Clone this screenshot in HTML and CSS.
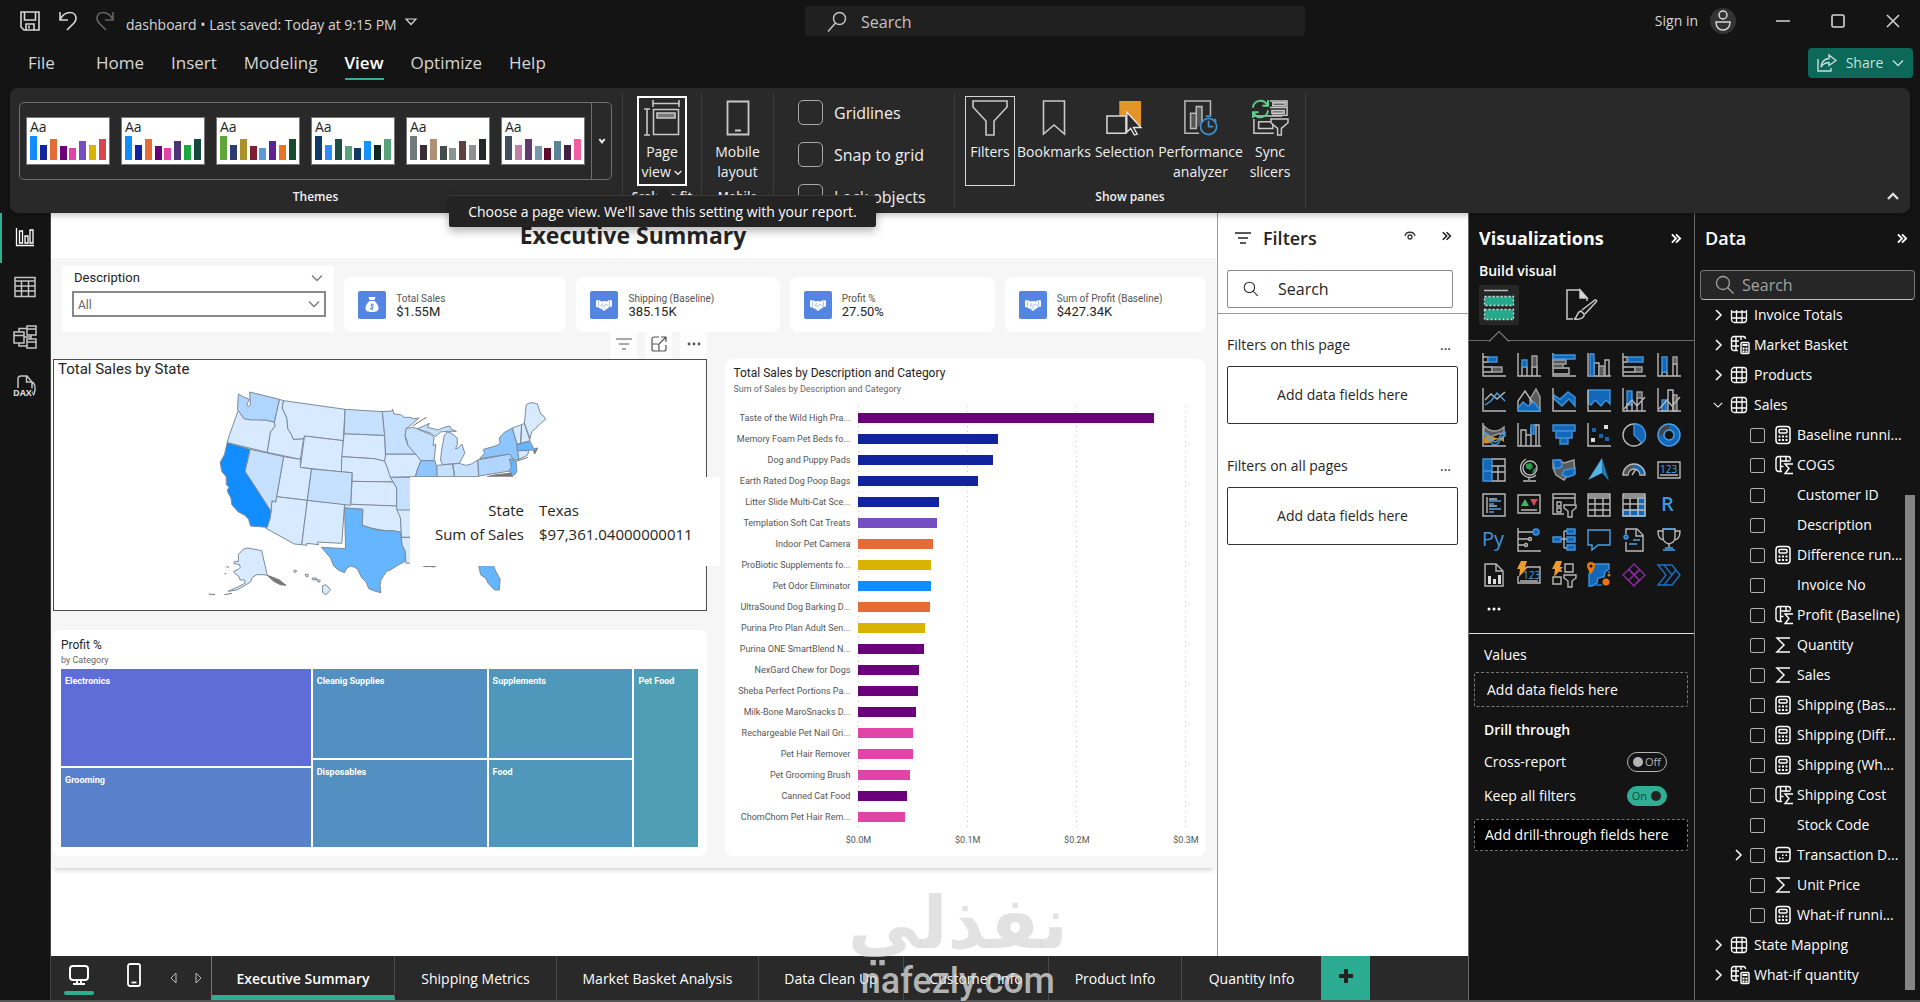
FILE: index.html
```html
<!DOCTYPE html>
<html lang="en">
<head>
<meta charset="utf-8">
<meta name="viewport" content="width=device-width, initial-scale=1">
<title>dashboard</title>
<link rel="stylesheet" href="styles.css">
</head>
<body>
<svg class="defs" width="0" height="0" aria-hidden="true">
  <symbol id="chev-r" viewBox="0 0 10 12"><path d="M3 1l5 5-5 5" fill="none" stroke="currentColor" stroke-width="1.5"/></symbol>
  <symbol id="chev-d" viewBox="0 0 12 12"><path d="M1 3.500l5 5 5-5" fill="none" stroke="currentColor" stroke-width="1.300"/></symbol>
  <symbol id="dbl-r" viewBox="0 0 12 12"><path d="M1 1.500l4.500 4.500L1 10.500M5.500 1.500L10 6l-4.500 4.500" fill="none" stroke="currentColor" stroke-width="2"/></symbol>
  <symbol id="lens" viewBox="0 0 20 20"><g fill="none" stroke="currentColor" stroke-width="1.300"><circle cx="8" cy="8" r="6.500"/><path d="M12.500 12.500l6 6"/></g></symbol>
  <symbol id="table" viewBox="0 0 18 18"><g fill="none" stroke="currentColor" stroke-width="1.300"><rect x="1.500" y="1.500" width="15" height="15" rx="3"/><path d="M6.500 1.500v15M12 1.500v15M1.500 6h15M1.500 12h15"/></g></symbol>
  <symbol id="table-calc" viewBox="0 0 20 20"><g fill="none" stroke="currentColor" stroke-width="1.400"><path d="M8 15.500H4a2.500 2.500 0 0 1-2.500-2.500V4A2.500 2.500 0 0 1 4 1.500h9A2.500 2.500 0 0 1 15.500 4M6 1.500v14M11 1.500V5M1.500 6H9M1.500 11H9"/><rect x="11" y="7.500" width="8" height="11" rx="1"/></g><path d="M12.500 9h5v2h-5zM12.500 12.500h2v2h-2zM15.500 12.500h2v2h-2zM12.500 15.500h2v2h-2zM15.500 15.500h2v2h-2z" fill="currentColor"/></symbol>
  <symbol id="calc" viewBox="0 0 18 20"><g fill="none" stroke="currentColor" stroke-width="1.500"><rect x="2" y="1.500" width="14" height="17" rx="3"/><rect x="5" y="4.500" width="8" height="3.500" rx="1"/></g><path d="M4.500 10.500h2v2h-2zM8 10.500h2v2H8zM11.500 10.500h2v2h-2zM4.500 14h2v2h-2zM8 14h2v2H8zM11.500 14h2v2h-2z" fill="currentColor"/></symbol>
  <symbol id="col-sum" viewBox="0 0 20 20"><g fill="none" stroke="currentColor" stroke-width="1.400"><path d="M8 16.500H5A3 3 0 0 1 2 13.500v-9A3 3 0 0 1 5 1.500h9a2.500 2.500 0 0 1 2.500 2.500v1M6.500 1.500v15M12 1.500V7M6.500 6h10M6.500 11.500h3"/><path d="M19 9h-8l4 4.500-4 5h8"/></g></symbol>
  <symbol id="sigma" viewBox="0 0 18 20"><path d="M16 3H3l7 7-7 7h13" fill="none" stroke="currentColor" stroke-width="1.500"/></symbol>
  <symbol id="cal" viewBox="0 0 18 20"><g fill="none" stroke="currentColor" stroke-width="1.500"><rect x="2" y="2.500" width="14" height="14" rx="3"/><path d="M2 7h14"/></g><path d="M8 9.500h1.500V11H8zM11.500 9.500H13V11h-1.500zM5 12.500h1.500V14H5zM8 12.500h1.500V14H8z" fill="currentColor"/></symbol>
  <symbol id="shake" viewBox="0 0 28 28"><path d="M6 9.500l3-.5 2 1.500 3-.5 3 .5 2-1.500 3 .5v6l-2.500.5L14 20l-5.500-3.500L6 16z" fill="#fff"/><path d="M8.500 9.500v6M19.500 9.500v6M11 17l2 2M13 15.500l2.500 2.500M13 12l-2 2.500 3 .5 2-2 3.500 3" fill="none" stroke="#98b6f2" stroke-width=".8"/></symbol>
</svg>

<header class="titlebar">
  <div class="quick">
    <button aria-label="Save"><svg width="20" height="20" viewBox="0 0 20 20" fill="none" stroke="currentColor" stroke-width="1.600"><path d="M1 1h18v18H4l-3-3zM4.500 1v8h11V1M6 19v-6h8v6M9 14.500v3"/></svg></button>
    <button aria-label="Undo"><svg width="18" height="20" viewBox="0 0 18 20" fill="none" stroke="currentColor" stroke-width="1.600"><path d="M1 1v8h8M1.500 8C4 3 8 1.500 11 1.500c4 0 6 3 6 6 0 2-1 3-2 4.500l-7 7"/></svg></button>
    <button class="dim" aria-label="Redo"><svg width="18" height="20" viewBox="0 0 18 20" fill="none" stroke="currentColor" stroke-width="1.600"><path d="M17 1v8H9M16.500 8C14 3 10 1.500 7 1.500c-4 0-6 3-6 6 0 2 1 3 2 4.500l7 7"/></svg></button>
    <button class="docname">dashboard&nbsp;• Last saved: Today at 9:15 PM <svg width="12" height="8" viewBox="0 0 12 8" fill="none" stroke="currentColor" stroke-width="1.200"><path d="M1 1h10L6 6.500z"/></svg></button>
  </div>
  <label class="topsearch"><svg width="20" height="22" viewBox="0 0 20 22" fill="none" stroke="currentColor" stroke-width="1.500"><circle cx="12.500" cy="7.500" r="6"/><path d="M8.500 12L1 20.500"/></svg><input type="search" placeholder="Search" aria-label="Search"></label>
  <div class="account">
    <button class="signin">Sign in <svg width="26" height="26" viewBox="0 0 26 26" fill="none" stroke="currentColor" stroke-width="1.500"><circle cx="13" cy="13" r="13" fill="#333" stroke="none"/><circle cx="13" cy="7" r="4"/><path d="M6 14h14c0 5-3 8-7 8s-7-3-7-8z"/></svg></button>
    <button class="win" aria-label="Minimize"><svg width="14" height="14" viewBox="0 0 14 14" fill="none" stroke="currentColor" stroke-width="1.500"><path d="M0 7h14"/></svg></button>
    <button class="win" aria-label="Maximize"><svg width="14" height="14" viewBox="0 0 14 14" fill="none" stroke="currentColor" stroke-width="1.600"><rect x="1" y="1" width="12" height="12" rx="1.500"/></svg></button>
    <button class="win" aria-label="Close"><svg width="14" height="14" viewBox="0 0 14 14" fill="none" stroke="currentColor" stroke-width="1.500"><path d="M1 1l12 12M13 1L1 13"/></svg></button>
  </div>
</header>

<nav class="menubar">
  <a href="#file" class="file">File</a><a href="#home">Home</a><a href="#insert">Insert</a><a href="#modeling">Modeling</a><a href="#view" class="on">View</a><a href="#optimize">Optimize</a><a href="#help">Help</a>
  <button class="share"><svg width="20" height="18" viewBox="0 0 20 18" fill="none" stroke="currentColor" stroke-width="1.400"><path d="M1 5v12h13v-3M12 1l7 5.500-7 5V8.500C8 8.500 6 10 4 13c.5-5 3-8 8-8.500z"/></svg>Share<svg width="12" height="12"><use href="#chev-d"/></svg></button>
</nav>

<section class="ribbon">
  <div class="group g-themes">
    <div class="gbody">
      <div class="gallery">
        <button class="thumb" aria-label="Theme 1"><svg width="82" height="46" viewBox="0 0 82 46"><text x="3" y="14">Aa</text><path fill="#118dff" d="M3 18h7v24H3z"/><path fill="#12239e" d="M13 27h7v15h-7z"/><path fill="#e66c37" d="M23 21h7v21h-7z"/><path fill="#6b007b" d="M33 28h7v14h-7z"/><path fill="#e044a7" d="M42 30h7v12h-7z"/><path fill="#744ec2" d="M52 23h7v19h-7z"/><path fill="#d9b300" d="M62 27h7v15h-7z"/><path fill="#d64550" d="M72 21h7v21h-7z"/></svg></button>
        <button class="thumb" aria-label="Theme 2"><svg width="82" height="46" viewBox="0 0 82 46"><text x="3" y="14">Aa</text><path fill="#118dff" d="M3 18h7v24H3z"/><path fill="#12239e" d="M13 27h7v15h-7z"/><path fill="#e66c37" d="M23 21h7v21h-7z"/><path fill="#6b007b" d="M33 28h7v14h-7z"/><path fill="#e044a7" d="M42 30h7v12h-7z"/><path fill="#4d3376" d="M52 23h7v19h-7z"/><path fill="#1aab40" d="M62 27h7v15h-7z"/><path fill="#15493b" d="M72 21h7v21h-7z"/></svg></button>
        <button class="thumb" aria-label="Theme 3"><svg width="82" height="46" viewBox="0 0 82 46"><text x="3" y="14">Aa</text><path fill="#5fa53a" d="M3 18h7v24H3z"/><path fill="#2f3a6e" d="M13 27h7v15h-7z"/><path fill="#ac9125" d="M23 21h7v21h-7z"/><path fill="#7f1d31" d="M33 28h7v14h-7z"/><path fill="#5b9bd5" d="M42 30h7v12h-7z"/><path fill="#5c2192" d="M52 23h7v19h-7z"/><path fill="#ea7327" d="M62 27h7v15h-7z"/><path fill="#174c31" d="M72 21h7v21h-7z"/></svg></button>
        <button class="thumb" aria-label="Theme 4"><svg width="82" height="46" viewBox="0 0 82 46"><text x="3" y="14">Aa</text><path fill="#0f3a66" d="M3 18h7v24H3z"/><path fill="#2f89ff" d="M13 27h7v15h-7z"/><path fill="#1d4e42" d="M23 21h7v21h-7z"/><path fill="#58a37c" d="M33 28h7v14h-7z"/><path fill="#0f3a66" d="M42 30h7v12h-7z"/><path fill="#1692ff" d="M52 23h7v19h-7z"/><path fill="#0c2620" d="M62 27h7v15h-7z"/><path fill="#58a37c" d="M72 21h7v21h-7z"/></svg></button>
        <button class="thumb" aria-label="Theme 5"><svg width="82" height="46" viewBox="0 0 82 46"><text x="3" y="14">Aa</text><path fill="#6f7b79" d="M3 18h7v24H3z"/><path fill="#3a2c30" d="M13 27h7v15h-7z"/><path fill="#b09074" d="M23 21h7v21h-7z"/><path fill="#434b4b" d="M33 28h7v14h-7z"/><path fill="#879695" d="M42 30h7v12h-7z"/><path fill="#613f3b" d="M52 23h7v19h-7z"/><path fill="#909191" d="M62 27h7v15h-7z"/><path fill="#242727" d="M72 21h7v21h-7z"/></svg></button>
        <button class="thumb" aria-label="Theme 6"><svg width="82" height="46" viewBox="0 0 82 46"><text x="3" y="14">Aa</text><path fill="#3f4f5e" d="M3 18h7v24H3z"/><path fill="#c17fa2" d="M13 27h7v15h-7z"/><path fill="#63386a" d="M23 21h7v21h-7z"/><path fill="#7797ac" d="M33 28h7v14h-7z"/><path fill="#620a2e" d="M42 30h7v12h-7z"/><path fill="#5c8299" d="M52 23h7v19h-7z"/><path fill="#402144" d="M62 27h7v15h-7z"/><path fill="#f0609e" d="M72 21h7v21h-7z"/></svg></button>
        <button class="more" aria-label="More themes"><svg width="8" height="8" viewBox="0 0 12 12" fill="none" stroke="#eee" stroke-width="3"><path d="M2 3l4 5 4-5"/></svg></button>
      </div>
    </div>
    <div class="glabel">Themes</div>
  </div>
  <div class="group g-scale">
    <div class="gbody">
      <button class="big focus"><svg width="38" height="36" viewBox="0 0 38 36" fill="none" stroke="#c8c8c8" stroke-width="1.600"><path d="M10 0v7M36 0v7M10 3.500h26M1 9h6M1 35h6M4 9v26M10.500 9.500h25v25h-25z"/><path d="M14 13h18v5H14z" fill="#777"/></svg><span>Page<br>view <svg width="8" height="8" viewBox="0 0 12 12" fill="none" stroke="#eee" stroke-width="2"><path d="M1 3l5 5 5-5"/></svg></span></button>
    </div>
    <div class="glabel">Scale to fit</div>
    <div class="tip" role="tooltip">Choose a page view. We'll save this setting with your report.</div>
  </div>
  <div class="group g-mobile">
    <div class="gbody">
      <button class="big"><svg width="24" height="36" viewBox="0 0 24 36" fill="none" stroke="#c8c8c8" stroke-width="1.800"><path d="M1.500 1.500h21v33h-21zM9 30.500h6"/></svg><span>Mobile<br>layout</span></button>
    </div>
    <div class="glabel">Mobile</div>
  </div>
  <div class="group g-opts">
    <label><input type="checkbox" class="box-lg">Gridlines</label>
    <label><input type="checkbox" class="box-lg">Snap to grid</label>
    <label><input type="checkbox" class="box-lg">Lock objects</label>
  </div>
  <div class="group g-panes">
    <div class="gbody">
      <button class="big pressed"><svg width="36" height="36" viewBox="0 0 36 36" fill="none" stroke="#c8c8c8" stroke-width="1.600"><path d="M1 1h34v6L22 21v14h-8V21L1 7z"/></svg><span>Filters</span></button>
      <button class="big"><svg width="24" height="36" viewBox="0 0 24 36" fill="none" stroke="#c8c8c8" stroke-width="1.600"><path d="M1.500 1h21v33L12 25 1.500 34z"/></svg><span>Bookmarks</span></button>
      <button class="big"><svg width="38" height="38" viewBox="0 0 38 38"><path d="M14 1h23v27H26L14 16z" fill="#e39627"/><path d="M1 17h20v18H1z" fill="#292929" stroke="#d8d8d8" stroke-width="1.600"/><path d="M22 13l15 16h-8l4 7-3 1-4-7-4 4z" fill="#292929" stroke="#e6e6e6" stroke-width="1.400"/></svg><span>Selection</span></button>
      <button class="big"><svg width="36" height="38" viewBox="0 0 36 38" fill="none" stroke="#b8b8b8" stroke-width="1.600"><path d="M16 35H1V1h27v15"/><path d="M7 30V14h6v16zM13 30V7h6v17" fill="#555"/><g stroke="#3f92cf" stroke-width="1.800"><circle cx="26" cy="28" r="8.500" fill="#292929"/><path d="M26 22v6h5M23 17h6M32 20l2 2"/></g></svg><span>Performance<br>analyzer</span></button>
      <button class="big"><svg width="40" height="38" viewBox="0 0 40 38" fill="none" stroke="#c8c8c8" stroke-width="1.600"><path d="M20 1h18v7H20M20 8h18v8H22M3 20v15h21M3 17h30M8 23h15v7H8z"/><path d="M23 3h13v3H23zM22 11h13v3H22z" fill="#666"/><path d="M21 20h18v4l-7 6v7h-4v-7l-7-6z" fill="#292929"/><g stroke="#5fcf8b" stroke-width="2"><path d="M2 8a8 8 0 0 1 15-3M18 0v6h-6M18 11a8 8 0 0 1-15 3M2 19v-6h6"/></g></svg><span>Sync<br>slicers</span></button>
    </div>
    <div class="glabel">Show panes</div>
  </div>
  <button class="collapse" aria-label="Collapse ribbon"><svg width="12" height="12" viewBox="0 0 12 12" fill="none" stroke="#ddd" stroke-width="2.400"><path d="M1 9l5-5 5 5"/></svg></button>
</section>

<main class="shell">
  <nav class="rail">
    <button class="on" aria-label="Report view"><svg width="20" height="20" viewBox="0 0 20 20" fill="none" stroke="currentColor" stroke-width="1.300"><path d="M1.500 1v17.500H19M4.500 4h3v12h-3zM10 9h3v7h-3zM15 3h3v13h-3z"/></svg></button>
    <button aria-label="Table view"><svg width="22" height="22" viewBox="0 0 22 22" fill="none" stroke="currentColor" stroke-width="1.500"><path d="M1 1.500h20v19H1zM1 5h20M1 10h20M1 15h20M7.500 5v15.500M14.500 5v15.500"/></svg></button>
    <button aria-label="Model view"><svg width="24" height="24" viewBox="0 0 24 24" fill="none" stroke="currentColor" stroke-width="1.500"><path d="M1 7h10v11H1zM1 10.500h10M14 1h9v9h-9zM14 4h9M14 14h9v9h-9zM14 17h9M6 7V3.500h8M6 18v3h8M11 12h7V10M18 12v2"/></svg></button>
    <button aria-label="DAX query view"><svg width="26" height="26" viewBox="0 0 26 26" fill="none" stroke="currentColor" stroke-width="1.500"><path d="M6 14V4.500A3 3 0 0 1 9 2h6l5 6v13a3 3 0 0 1-2 2M14.500 2v6H20M21 8c3 4 3 10-1 15"/><text x="1" y="22">DAX</text></svg></button>
  </nav>

  <section class="workspace">
    <div class="stage">
      <div class="canvas">
        <h1>Executive Summary</h1>
        <div class="report">
          <div class="kpis">
            <div class="slicer">
              <label for="desc">Description</label>
              <svg class="cv" width="12" height="12"><use href="#chev-d"/></svg>
              <div class="selwrap"><select id="desc"><option>All</option></select><svg width="12" height="12"><use href="#chev-d"/></svg></div>
            </div>
            <div class="kpi"><svg width="28" height="28" viewBox="0 0 28 28"><rect width="28" height="28" rx="2" fill="#5585e3"/><path d="M10.500 6h7l-1 3h-5zM11.500 10h5c3 3 4 5 4 7 0 3-2 4-6.500 4s-6.500-1-6.500-4c0-2 1-4 4-7z" fill="#fff"/><path d="M16 14c-3-1-4 .5-2 1.500s1 3-2 2M14 12.500v7" fill="none" stroke="#5585e3"/></svg><div><span>Total Sales</span><b>$1.55M</b></div></div>
            <div class="kpi"><svg width="28" height="28" viewBox="0 0 28 28"><rect width="28" height="28" rx="2" fill="#5585e3"/><use href="#shake"/></svg><div><span>Shipping (Baseline)</span><b>385.15K</b></div></div>
            <div class="kpi"><svg width="28" height="28" viewBox="0 0 28 28"><rect width="28" height="28" rx="2" fill="#5585e3"/><use href="#shake"/></svg><div><span>Profit %</span><b>27.50%</b></div></div>
            <div class="kpi"><svg width="28" height="28" viewBox="0 0 28 28"><rect width="28" height="28" rx="2" fill="#5585e3"/><use href="#shake"/></svg><div><span>Sum of Profit (Baseline)</span><b>$427.34K</b></div></div>
          </div>
          <div class="visuals">
            <div class="leftcol">
              <div class="vtools">
                <button aria-label="Filter"><svg width="16" height="12" viewBox="0 0 16 12" fill="none" stroke="#555" stroke-width="1.200"><path d="M0 1h16M3 6h10M6 11h4"/></svg></button>
                <button aria-label="Focus mode"><svg width="16" height="16" viewBox="0 0 16 16" fill="none" stroke="#555" stroke-width="1.200"><path d="M8 1H3a2 2 0 0 0-2 2v10a2 2 0 0 0 2 2h10a2 2 0 0 0 2-2V9M1 8h5a2 2 0 0 1 2 2v5M8 8l7-7M10 1h5v5"/></svg></button>
                <button aria-label="More options"><svg width="14" height="4" viewBox="0 0 14 4" fill="#555"><circle cx="2" cy="2" r="1.400"/><circle cx="7" cy="2" r="1.400"/><circle cx="12" cy="2" r="1.400"/></svg></button>
              </div>
              <div class="mapcard">
                <h2>Total Sales by State</h2>
                <svg class="map" width="354" height="210" viewBox="440 550 760 630" preserveAspectRatio="none">
                  <g class="s1">
                    <path d="M516 616l12 26 46 4 19 6 2 12-10 18-7 61-86-29 5-24z"/>
                    <path d="M604 584l9 4-3 22 10 30 2 32 8 18 4 14 22-2-7 62-71-21 7-61 10-18-2-12z"/>
                    <path d="M613 588l132 26-4 94-83-14-2 8-22 2-4-14-8-18-2-32-10-30z"/>
                    <path d="M658 694l83 14-4 94-88-14z"/>
                    <path d="M613 756l36 8v24l24 5-9 94-66-11z"/>
                    <path d="M598 876l66 11-12 133-16-2-62-48 10-30 2-20 2-32 8 4z"/>
                    <path d="M664 887l80 11-6 118-52-4 2 8-25-4v6l-11-2z"/>
                    <path d="M743 687l87 5 2 68-2 10-22-8-70-6z"/>
                    <path d="M738 756l70 6 22 8 10 30 8 32-88-2v-26l-23-2z"/>
                    <path d="M760 830l88 2 8 18v54l-99-4z"/>
                    <path d="M744 898l112 6 8 36 2 42-36-4-30-8-18-8 1-48-39-4z"/>
                    <path d="M832 748h64l12 20-8 28-4 20-54 2-6-28-6-20z"/>
                    <path d="M856 914h44v84h-34l-2-58zM866 998h34v76l-24 2-2-36-7-20z"/>
                    <path d="M1104 670l20-10-2 56-8 2zM1124 660l6-4 12 52-20 8zM1130 656l2-30 2-26 5-4 9-2 10 4 4 18 4 14 4 2 6 12-4 4-7 8-5 6-6 10-8 8-4 22z"/>
                    <path d="M1114 738h26l-4 14-18 12z"/>
                    <path d="M516 1050l10-16 10-4 30 8 12 74-8-2-14 0-10 8-4 14-14 12-16 12-18 4 22-14 14-10 0-10-10 0-4-12-8-8-2-6 10-6 4-6-2-8-12-4 2-6 8 0z"/>
                    <path d="M696 1144l8-4 10 16-10 14-7-6zM636 1096l5 2-2 5-4-2zM660 1108l6 2-1 7-5-3zM674 1120l10 0-3 6-6-1zM684 1124l8 3-2 6-5-3z"/>
                  </g>
                  <g class="s2">
                    <path d="M541 734l72 22-15 120-2 16-8-4-2 32-56-120z"/>
                    <path d="M673 793l87 11-3 98-93-15z"/>
                    <path d="M745 614l80 7 5 71-87-5z"/>
                    <path d="M825 621l21-2 1-6 3 15 14 2 8 8 12 0 8 4 12-2-12 14-8 10-8 8-2 22 2 14 4 14 8 12 8 14h-64l-2-56z"/>
                    <path d="M842 818h58v98h-44v-66z"/>
                    <path d="M876 672l14-4 10 4 14 10 16 8 6 10-2 24 6-6-4 50h-28l-12-20-16-26-2-14-4-14z"/>
                    <path d="M900 672l14-8 12-8-4 12 12 4 10 4 14-8 12-4 2 8 12 8-20 0-14 2-6 8-6 6-8-10z"/>
                    <path d="M958 692l6-10 10 4 12 14v20l-4 12 6-2 8-12 6 28-4 10-8 20-36 4-4-14 2-26z"/>
                    <path d="M942 782l34-4 4 38h-38zM976 778l14-2 14 6 12-4 14-12 2 50h-52z"/>
                  </g>
                  <g class="s3">
                    <path d="M516 568l10 8 14 8-4 10-2 8 4 4 4-8-2-36 64 22-11 68-19-6-30 0-16-4-8-16-6-12z"/>
                    <path d="M1030 766l68-18 10 18-6 12 2 22-10 0-62 14z"/>
                  </g>
                  <g class="s4">
                    <path d="M1034 762l10-16-2-12 16-6 14-6 6-6-2-16 10-16 18-14 10 50 4 44-10 2-10-18z"/>
                    <path d="M908 768h30l4 22v26h-46l4-20z"/>
                  </g>
                  <g class="s5">
                    <path d="M744 910l39 4-1 48 18 8 14 6 16 2 20 0 14 6 3 36 7 20v30l-16 12-16 14-8 4-12 26-2 16 2 22-12-4-14-8-6-20-10-14-8-24-6-6-10-4-8 8-4 12-14-8-10-14-6-22-20-32 52 4z"/>
                    <path d="M1032 1083h32l4 16 10 25-2 32-10 0-14-20-4-14-12-12z"/>
                    <path d="M1114 720l28-10 4 10 4 12 8-2-4 10-8-4-32 2zM1098 762l14 8 2 30-6 12-12-12 6-12z"/>
                  </g>
                  <path class="s6" d="M492 714l49 20-11 66 56 120-2 20-6 28-36-4-4-20-8-12-14-10-8-12-6-10-2-20-6-15-2-10 4-6-6-10 0-22-10-18-3-26 9-23z"/>
                  <path class="s7" d="M578 1112l12 6 14 8 14 16-12-2-14-10zM1112 770l26-12M1050 816l20-6 30-4 6 10M912 1084l8 2 8-1 6 2 6-2M890 664l20-18 10-8M452 1168l14 2M486 1170l16-4M490 1086l6 2M486 1108l4-2M1150 740l2 8 6-18"/>
                </svg>
                <div class="maptip"><span>State</span><span>Texas</span><span>Sum of Sales</span><span>$97,361.04000000011</span></div>
              </div>
              <div class="treecard">
                <h3>Profit %</h3><p>by Category</p>
                <div class="tree">
                  <div class="tc t1"><div>Electronics</div><div>Grooming</div></div>
                  <div class="tc t2"><div>Cleanig Supplies</div><div>Disposables</div></div>
                  <div class="tc t3"><div>Supplements</div><div>Food</div></div>
                  <div class="tc t4"><div>Pet Food</div></div>
                </div>
              </div>
            </div>
            <div class="barcard">
              <h3>Total Sales by Description and Category</h3><p>Sum of Sales by Description and Category</p>
              <div class="chart">
                <div class="gridl"><i></i><i></i><i></i><i></i></div>
                <div class="row"><span>Taste of the Wild High Pra...</span><div><b class="pu" style="width:90.2%"></b></div></div>
                <div class="row"><span>Memory Foam Pet Beds fo...</span><div><b class="na" style="width:42.6%"></b></div></div>
                <div class="row"><span>Dog and Puppy Pads</span><div><b class="na" style="width:41%"></b></div></div>
                <div class="row"><span>Earth Rated Dog Poop Bags</span><div><b class="na" style="width:36.5%"></b></div></div>
                <div class="row"><span>Litter Slide Multi-Cat Sce...</span><div><b class="na" style="width:24.6%"></b></div></div>
                <div class="row"><span>Templation Soft Cat Treats</span><div><b class="vi" style="width:24%"></b></div></div>
                <div class="row"><span>Indoor Pet Camera</span><div><b class="or" style="width:22.7%"></b></div></div>
                <div class="row"><span>ProBiotic Supplements fo...</span><div><b class="ye" style="width:22.1%"></b></div></div>
                <div class="row"><span>Pet Odor Eliminator</span><div><b class="bl" style="width:22.1%"></b></div></div>
                <div class="row"><span>UltraSound Dog Barking D...</span><div><b class="or" style="width:21.7%"></b></div></div>
                <div class="row"><span>Purina Pro Plan Adult Sen...</span><div><b class="ye" style="width:20.3%"></b></div></div>
                <div class="row"><span>Purina ONE SmartBlend N...</span><div><b class="pu" style="width:20.1%"></b></div></div>
                <div class="row"><span>NexGard Chew for Dogs</span><div><b class="pu" style="width:18.5%"></b></div></div>
                <div class="row"><span>Sheba Perfect Portions Pa...</span><div><b class="pu" style="width:18.2%"></b></div></div>
                <div class="row"><span>Milk-Bone MaroSnacks D...</span><div><b class="pu" style="width:17.5%"></b></div></div>
                <div class="row"><span>Rechargeable Pet Nail Gri...</span><div><b class="pi" style="width:16.7%"></b></div></div>
                <div class="row"><span>Pet Hair Remover</span><div><b class="pi" style="width:16.6%"></b></div></div>
                <div class="row"><span>Pet Grooming Brush</span><div><b class="pi" style="width:15.6%"></b></div></div>
                <div class="row"><span>Canned Cat Food</span><div><b class="pu" style="width:14.9%"></b></div></div>
                <div class="row"><span>ChomChom Pet Hair Rem...</span><div><b class="pi" style="width:14.2%"></b></div></div>
              </div>
              <div class="axis"><span>$0.0M</span><span>$0.1M</span><span>$0.2M</span><span>$0.3M</span></div>
            </div>
          </div>
        </div>
      </div>

      <aside class="filters">
        <header><svg width="16" height="12" viewBox="0 0 16 12" fill="none" stroke="#252423" stroke-width="1.500"><path d="M0 1h16M3 6h10M5 11h6"/></svg><h2>Filters</h2><button aria-label="Hide"><svg width="12" height="10" viewBox="0 0 12 10" fill="none" stroke="#333" stroke-width="1.300"><path d="M1 5c1-5 9-5 10 0"/><circle cx="6" cy="6" r="2"/></svg></button><button aria-label="Collapse"><svg width="10" height="10"><use href="#dbl-r"/></svg></button></header>
        <div class="fsearch"><label><svg width="16" height="16"><use href="#lens"/></svg><input type="search" placeholder="Search" aria-label="Search filters"></label></div>
        <div class="fsec"><h3>Filters on this page</h3><button aria-label="More">...</button></div>
        <div class="drop">Add data fields here</div>
        <div class="fsec"><h3>Filters on all pages</h3><button aria-label="More">...</button></div>
        <div class="drop">Add data fields here</div>
      </aside>
    </div>

    <nav class="pages">
      <button class="dev on" aria-label="Desktop layout"><svg width="20" height="20" viewBox="0 0 20 20" fill="none" stroke="currentColor" stroke-width="2"><rect x="1" y="1" width="18" height="14" rx="3"/><path d="M4 19h12M8 15v4M12 15v4"/></svg></button>
      <button class="dev" aria-label="Mobile layout"><svg width="14" height="24" viewBox="0 0 14 24" fill="none" stroke="currentColor" stroke-width="1.800"><rect x="1" y="1" width="12" height="22" rx="2"/><path d="M4.500 19.500h5"/></svg></button>
      <button class="arr" aria-label="Previous page"><svg width="7" height="12" viewBox="0 0 7 12" fill="none" stroke="currentColor"><path d="M6 1v10L1 6z"/></svg></button>
      <button class="arr" aria-label="Next page"><svg width="7" height="12" viewBox="0 0 7 12" fill="none" stroke="currentColor"><path d="M1 1v10l5-5z"/></svg></button>
      <a href="#p1" class="on">Executive Summary</a><a href="#p2">Shipping Metrics</a><a href="#p3">Market Basket Analysis</a><a href="#p4">Data Clean Up</a><a href="#p5">Customer Info</a><a href="#p6">Product Info</a><a href="#p7">Quantity Info</a>
      <button class="add" aria-label="New page"><svg width="14" height="14" viewBox="0 0 14 14" stroke="#222" stroke-width="4"><path d="M7 0v14M0 7h14"/></svg></button>
    </nav>
    <div class="watermark"><span lang="ar" dir="rtl">نفذلي</span><span>nafezly.com</span></div>
  </section>

  <aside class="viz">
    <header><h2>Visualizations</h2><button aria-label="Collapse"><svg width="11" height="11"><use href="#dbl-r"/></svg></button></header>
    <h3>Build visual</h3>
    <div class="modes">
      <button class="on" aria-label="Build visual"><svg width="32" height="32" viewBox="0 0 32 32"><path d="M1 1.500h24" stroke="#bbb" stroke-width="1.500"/><g fill="#26a88a" stroke="#ddd" stroke-width="1.300" stroke-dasharray="2 2"><path d="M1.500 7.500h29v9h-29zM1.500 20.500h29v10h-29z"/></g></svg></button>
      <button aria-label="Format page"><svg width="32" height="32" viewBox="0 0 32 32" fill="none" stroke="#c8c8c8" stroke-width="1.500"><path d="M7 30H1V1h13l7 8v3"/><path d="M14 1v8h7z" fill="#ddd"/><path d="M8 30c4-1 2-7 7-8l3 3c1 4-5 6-10 5zM16 21L29 11c2 0 2 1 1 2L19 25"/></svg></button>
    </div>
    <div class="caret"><svg width="22" height="12" viewBox="0 0 22 12" fill="#141414" stroke="#777" stroke-width="1.200"><path d="M1 11.500L11 1.500l10 10"/></svg></div>
    <div class="vgrid">
      <button aria-label="Stacked bar chart"><svg viewBox="0 0 24 24"><path class="g" d="M1 0v23h23M1 4h5v5H1M1 14h9v5H1"/><path class="b" d="M6 4h9v5H6z"/><path class="gf" d="M10 14h10v5H10z"/></svg></button>
      <button aria-label="Stacked column chart"><svg viewBox="0 0 24 24"><path class="g" d="M1 0v23h23M5 23v-9h5v9M15 23v-9h5v9"/><path class="b" d="M5 7h5v7H5z"/><path class="gf" d="M15 3h5v11h-5z"/></svg></button>
      <button aria-label="Clustered bar chart"><svg viewBox="0 0 24 24"><path class="g" d="M1 0v23h23M1 15h16v6H1"/><path class="b" d="M1 2h22v4H1z"/><path class="gf" d="M1 7h13v4H1zM1 11h10v4H1z"/></svg></button>
      <button aria-label="Clustered column chart"><svg viewBox="0 0 24 24"><path class="g" d="M1 0v23h23M7 23V10h5v13M18 23V7h4v16"/><path class="b" d="M3 1h4v22H3z"/><path class="gf" d="M12 13h5v10h-5z"/></svg></button>
      <button aria-label="100% stacked bar chart"><svg viewBox="0 0 24 24"><path class="g" d="M1 0v23h23M1 4h4v5H1M1 14h12v5H1"/><path class="b" d="M6 4h15v5H6z"/><path class="gf" d="M13 14h7v5h-7z"/></svg></button>
      <button aria-label="100% stacked column chart"><svg viewBox="0 0 24 24"><path class="g" d="M1 0v23h23M5 23v-4h5v4M16 23V11h4v12"/><path class="b" d="M5 4h5v15H5z"/><path class="gf" d="M16 4h4v7h-4z"/></svg></button>

      <button aria-label="Line chart"><svg viewBox="0 0 24 24"><path class="g" d="M1 0v23h23"/><path class="g" d="M3 12l6-6 6 5 8-7"/><path class="bl" d="M3 17l6-4 6-8 8 8"/></svg></button>
      <button aria-label="Area chart"><svg viewBox="0 0 24 24"><path class="gf" d="M13 11l6-10 4 8v14H13z"/><path class="g" d="M1 23V13L8 3l8 12M1 23h23"/><path class="b" d="M1 23v-3l5-6 5 4 6-4 6 8v1z"/></svg></button>
      <button aria-label="Stacked area chart"><svg viewBox="0 0 24 24"><path class="b" d="M2 7l6 4 8-7 7 5v9l-6-7-7 7-8-7z"/><path class="g" d="M1 0v23h23"/></svg></button>
      <button aria-label="100% stacked area chart"><svg viewBox="0 0 24 24"><path class="b" d="M1 2h22v14l-4-4-5 6-6-6-4 5-3-2z"/><path class="g" d="M1 2v21h23"/></svg></button>
      <button aria-label="Line and stacked column chart"><svg viewBox="0 0 24 24"><path class="b" d="M5 3h5v14H5z"/><path class="gf" d="M15 4h5v6h-5z"/><path class="g" d="M1 0v23h23M5 23v-8M10 15v8M15 10v13M20 10v13M2 21l8-9 5 6 8-9"/></svg></button>
      <button aria-label="Line and clustered column chart"><svg viewBox="0 0 24 24"><path class="b" d="M5 12h4v11H5z"/><path class="gf" d="M16 7h4v16h-4z"/><path class="g" d="M1 0v23h23M11 23V2h5v21M2 21l8-9 5 6 8-9"/></svg></button>

      <button aria-label="Ribbon chart"><svg viewBox="0 0 24 24"><path class="gf" d="M2 3c7 7 14 6 20 1v7c-6-3-13 7-20 0z"/><path d="M2 15c8-8 10 6 20-3v7c-10-8-12 4-20 1z" fill="#e08a1c"/><path class="bl" d="M2 10c8 0 6 9 11 9s4-9 10-10v4c-5 0-5 9-10 9S8 14 2 14z"/><path class="g" d="M1 0v23h23"/></svg></button>
      <button aria-label="Waterfall chart"><svg viewBox="0 0 24 24"><path class="g" d="M1 0v23h23M4 23V7h5v16M9 12h5v9M14 4v19M19 2v21M22 23V2h-5"/><path class="b" d="M14 2h3v9h-3z"/></svg></button>
      <button aria-label="Funnel chart"><svg viewBox="0 0 24 24"><path class="b" d="M1 2h22v6H1zM4 8h16v7H4zM8 15h8v6H8z"/></svg></button>
      <button aria-label="Scatter chart"><svg viewBox="0 0 24 24"><path class="g" d="M1 0v23h23"/><path fill="#1267b8" d="M5 5h4v4H5zM12 11h4v4h-4zM18 14h4v4h-4z"/><path fill="#ddd" d="M17 2h4v4h-4zM4 15h4v4H4z"/></svg></button>
      <button aria-label="Pie chart"><svg viewBox="0 0 24 24"><circle class="g" cx="12" cy="12" r="11"/><path class="b" d="M12 1v11l8 8A11 11 0 0 0 12 1z"/></svg></button>
      <button aria-label="Donut chart"><svg viewBox="0 0 24 24"><circle cx="12" cy="12" r="8" fill="none" stroke="#1267b8" stroke-width="6"/><path d="M12 4a8 8 0 0 0-8 8" fill="none" stroke="#444" stroke-width="5"/><circle class="bl" cx="12" cy="12" r="11"/><circle class="bl" cx="12" cy="12" r="5"/></svg></button>

      <button aria-label="Treemap"><svg viewBox="0 0 24 24"><path class="b" d="M1 1h9v12H1zM1 13h9v10H1z"/><path class="g" d="M10 1h13v22H10M10 8h13M16 8v15M16 14h7M10 14h6"/></svg></button>
      <button aria-label="Map"><svg viewBox="0 0 24 24"><circle class="g" cx="13" cy="10" r="7"/><path d="M9 6l5-1 2 4-3 3-4-2zM16 12l3-3v3l-4 4z" fill="#2a9a50"/><path class="g" d="M9 1C2 5 2 14 8 18c4 3 9 1 11-1M12 19v3M6 23h13"/></svg></button>
      <button aria-label="Filled map"><svg viewBox="0 0 24 24"><path class="gf" d="M1 3l6-1 5 3 10-3 1 14-7 1-4 5-8-5-3-7z"/><path class="b" d="M1 2h8l1 7-7 2zM12 12l11-2-1 7-6 2-6-2z"/></svg></button>
      <button aria-label="Azure map"><svg viewBox="0 0 24 24"><path d="M15 0L1 22l14-7z" fill="#54b2e4"/><path d="M15 0l7 23-7-8z" fill="#2079b0"/></svg></button>
      <button aria-label="Gauge"><svg viewBox="0 0 24 24"><path d="M3 16a9 9 0 0 1 17-2" fill="none" stroke="#555" stroke-width="4"/><path d="M11 8a9 9 0 0 1 10 8" fill="none" stroke="#1267b8" stroke-width="5"/><path class="g" d="M1 17a11 11 0 0 1 22 0h-5a6 6 0 0 0-12 0zM10 17l4-6"/></svg></button>
      <button aria-label="Card"><svg viewBox="0 0 24 24"><path class="g" d="M1 4h22v16H1zM3 17h18"/><text x="3" y="15">123</text></svg></button>

      <button aria-label="Multi-row card"><svg viewBox="0 0 24 24"><path class="g" d="M1 1h22v22H1zM5 4v16M7 6h8M7 13h8"/><path class="bl" d="M7 8h12M7 11h5M7 16h12M7 19h5"/></svg></button>
      <button aria-label="KPI"><svg viewBox="0 0 24 24"><path class="g" d="M1 2h22v18H1zM4 17h16"/><path d="M4 13l4-7 4 7z" fill="#4caf6e"/><path d="M13 6h8l-4 7z" fill="#e0435a"/></svg></button>
      <button aria-label="Slicer"><svg viewBox="0 0 24 24"><path class="g" d="M12 21H1V1h22v10M1 5h22M5 9h4v4H5zM5 15h4v4H5z"/><path class="g" d="M12 12h12v3l-4 3v6h-4v-6l-4-3z"/></svg></button>
      <button aria-label="Table"><svg viewBox="0 0 24 24"><path class="g" d="M1 1h22v22H1zM1 3h22M1 5h22M1 11h22M1 17h22M8 5v18M16 5v18"/></svg></button>
      <button aria-label="Matrix"><svg viewBox="0 0 24 24"><path class="b" d="M16 5h7v18h-7zM1 17h22v6H1z"/><path class="g" d="M1 1h22v22H1zM1 3h22M1 5h22M1 11h22M1 17h22M8 5v18M16 5v18"/></svg></button>
      <button aria-label="R script visual" class="tx r">R</button>

      <button aria-label="Python visual" class="tx">Py</button>
      <button aria-label="Key influencers"><svg viewBox="0 0 24 24"><path class="g" d="M1 0v23h23M1 4h15M1 11h10M1 17h6"/><circle class="g" cx="13" cy="11" r="1.500"/><circle class="g" cx="9" cy="17" r="1.500"/><circle class="b" cx="19" cy="4" r="3"/></svg></button>
      <button aria-label="Decomposition tree"><svg viewBox="0 0 24 24"><path class="g" d="M8 11h7M12 3v17M12 3h3M12 20h3"/><path class="b" d="M1 9h8v5H1zM15 1h8v5h-8zM15 9h8v5h-8zM15 17h8v5h-8z"/></svg></button>
      <button aria-label="Q&amp;A"><svg viewBox="0 0 24 24"><path class="bl" d="M1 2h22v15H11l-6 5v-5H1z"/></svg></button>
      <button aria-label="Narrative"><svg viewBox="0 0 24 24"><path class="g" d="M4 6V1h11l6 6v16H4v-9M14 1v7h7"/><circle class="b" cx="4" cy="9" r="2"/><path class="bl" d="M11 12h7M7 16h8"/></svg></button>
      <button aria-label="Metrics"><svg viewBox="0 0 24 24"><path class="g" d="M6 1h12v8c0 5-3 6-6 7-3-1-6-2-6-7zM6 3H1c0 6 2 9 6 9M18 3h5c0 6-2 9-6 9M12 16v4"/><path class="bl" d="M7 1h10M6 22h12M8 20h8"/></svg></button>

      <button aria-label="Paginated report"><svg viewBox="0 0 24 24"><path class="g" d="M3 1h11l7 7v15H3zM14 1v7h7"/><path d="M6 13h3v8H6zM11 16h3v5h-3zM16 12h3v9h-3z" fill="#ddd"/></svg></button>
      <button aria-label="Card (new)"><svg viewBox="0 0 24 24"><path class="g" d="M9 4h14v16H1v-7M3 18h18"/><text x="6" y="16">123</text><path d="M4-2h6L8 4h3L2 14l1-8H0z" fill="#f09c2e"/></svg></button>
      <button aria-label="Slicer (new)"><svg viewBox="0 0 24 24"><path class="g" d="M13 1h8v8h-8zM1 14h8v7H1zM12 12h12v3l-4 3v6h-4v-6l-4-3zM7 8h3"/><path d="M4-2h6L8 4h3L2 14l1-8H0z" fill="#f09c2e"/></svg></button>
      <button aria-label="ArcGIS maps"><svg viewBox="0 0 24 24"><path class="b" d="M2 11L7 1h15v5l-4 3-1 5-6 1-1 5-5 3H2z"/><path d="M8 22h7M22 8v2" stroke="#1267b8" stroke-width="2"/><path d="M4-1a4 4 0 0 1 4 4c0 3-4 8-4 8s-4-5-4-8a4 4 0 0 1 4-4z" fill="#e8760c"/><circle cx="4" cy="3" r="1.500" fill="#141414"/><circle cx="19" cy="19" r="3.500" fill="#e8760c"/><circle cx="22" cy="12" r="1.500" fill="#e8760c"/></svg></button>
      <button aria-label="Power Apps"><svg viewBox="0 0 24 24"><path d="M12 1l11 11-11 11L1 12zM7 6l10 11M17 7L7 17M12 1l6 6-6 5-5-5M12 12l5 5-5 6" fill="none" stroke="#8a2ba0" stroke-width="1.400"/></svg></button>
      <button aria-label="Power Automate"><svg viewBox="0 0 24 24"><path d="M1 2h14l8 10-8 10H1l8-10zM7 2l8 10-8 10M19 7L7 22" fill="none" stroke="#1f6fc4" stroke-width="1.400"/></svg></button>
    </div>
    <button class="vmore" aria-label="More visuals"><svg width="14" height="4" viewBox="0 0 14 4" fill="#fff"><circle cx="2" cy="2" r="1.500"/><circle cx="7" cy="2" r="1.500"/><circle cx="12" cy="2" r="1.500"/></svg></button>
    <div class="wells">
      <h4>Values</h4>
      <div class="well">Add data fields here</div>
      <h4 class="strong">Drill through</h4>
      <label class="sw"><span>Cross-report</span><input type="checkbox" role="switch"><i>Off</i></label>
      <label class="sw"><span>Keep all filters</span><input type="checkbox" role="switch" checked><i>On</i></label>
      <div class="well dark">Add drill-through fields here</div>
    </div>
  </aside>

  <aside class="data">
    <header><h2>Data</h2><button aria-label="Collapse"><svg width="11" height="11"><use href="#dbl-r"/></svg></button></header>
    <label class="dsearch"><svg width="20" height="20"><use href="#lens"/></svg><input type="search" placeholder="Search" aria-label="Search data"></label>
    <div class="treewrap">
      <ul class="fields">
        <li class="tb"><svg width="10" height="12"><use href="#chev-r"/></svg><svg width="18" height="18"><use href="#table"/></svg><span>Invoice Totals</span></li>
        <li class="tb"><svg width="10" height="12"><use href="#chev-r"/></svg><svg width="20" height="20"><use href="#table-calc"/></svg><span>Market Basket</span></li>
        <li class="tb"><svg width="10" height="12"><use href="#chev-r"/></svg><svg width="18" height="18"><use href="#table"/></svg><span>Products</span></li>
        <li class="tb"><svg width="12" height="12"><use href="#chev-d"/></svg><svg width="18" height="18"><use href="#table"/></svg><span>Sales</span></li>
        <li><label><input type="checkbox"><svg width="18" height="20"><use href="#calc"/></svg><span>Baseline runni...</span></label></li>
        <li><label><input type="checkbox"><svg width="20" height="20"><use href="#col-sum"/></svg><span>COGS</span></label></li>
        <li><label><input type="checkbox"><svg width="18" height="20"></svg><span>Customer ID</span></label></li>
        <li><label><input type="checkbox"><svg width="18" height="20"></svg><span>Description</span></label></li>
        <li><label><input type="checkbox"><svg width="18" height="20"><use href="#calc"/></svg><span>Difference run...</span></label></li>
        <li><label><input type="checkbox"><svg width="18" height="20"></svg><span>Invoice No</span></label></li>
        <li><label><input type="checkbox"><svg width="20" height="20"><use href="#col-sum"/></svg><span>Profit (Baseline)</span></label></li>
        <li><label><input type="checkbox"><svg width="18" height="20"><use href="#sigma"/></svg><span>Quantity</span></label></li>
        <li><label><input type="checkbox"><svg width="18" height="20"><use href="#sigma"/></svg><span>Sales</span></label></li>
        <li><label><input type="checkbox"><svg width="18" height="20"><use href="#calc"/></svg><span>Shipping (Bas...</span></label></li>
        <li><label><input type="checkbox"><svg width="18" height="20"><use href="#calc"/></svg><span>Shipping (Diff...</span></label></li>
        <li><label><input type="checkbox"><svg width="18" height="20"><use href="#calc"/></svg><span>Shipping (Wh...</span></label></li>
        <li><label><input type="checkbox"><svg width="20" height="20"><use href="#col-sum"/></svg><span>Shipping Cost</span></label></li>
        <li><label><input type="checkbox"><svg width="18" height="20"></svg><span>Stock Code</span></label></li>
        <li class="exp"><svg width="10" height="12"><use href="#chev-r"/></svg><label><input type="checkbox"><svg width="18" height="20"><use href="#cal"/></svg><span>Transaction D...</span></label></li>
        <li><label><input type="checkbox"><svg width="18" height="20"><use href="#sigma"/></svg><span>Unit Price</span></label></li>
        <li><label><input type="checkbox"><svg width="18" height="20"><use href="#calc"/></svg><span>What-if runni...</span></label></li>
        <li class="tb"><svg width="10" height="12"><use href="#chev-r"/></svg><svg width="18" height="18"><use href="#table"/></svg><span>State Mapping</span></li>
        <li class="tb"><svg width="10" height="12"><use href="#chev-r"/></svg><svg width="20" height="20"><use href="#table-calc"/></svg><span>What-if quantity</span></li>
      </ul>
      <div class="scroll"><div></div></div>
    </div>
  </aside>
</main>
</body>
</html>
```
FILE: styles.css
```css
:root {
  --bg: #141414;
  --panel: #292929;
  --accent: #2fae94;
  --line: #6a6a6a;
  --ui: "Open Sans", "Noto Sans", sans-serif;
  --chart: Roboto, "Noto Sans", sans-serif;
}
* { box-sizing: border-box; }
body {
  margin: 0;
  height: 100vh;
  display: flex;
  flex-direction: column;
  background: var(--bg);
  color: #fff;
  font: 14px/20px var(--ui);
  overflow: hidden;
}
button, input, select { font: inherit; color: inherit; }
button { background: none; border: 0; padding: 0; }
input { background: none; border: 0; padding: 0; outline: 0; min-width: 0; }
input::placeholder { color: inherit; opacity: 1; }
h1, h2, h3, h4, p, ul { margin: 0; padding: 0; font-size: inherit; font-weight: 400; }
a { color: inherit; text-decoration: none; }
svg { flex: none; overflow: visible; }
.defs { position: absolute; }

/* title bar */
.titlebar { display: grid; grid-template-columns: 785fr 500px 595fr; height: 42px; padding: 0 20px; color: #d6d6d6; }
.quick { display: flex; align-items: center; }
.quick button { display: flex; margin-right: 19px; }
.quick .dim { color: #666; margin-right: 12px; }
.quick .docname { align-items: center; gap: 8px; padding-top: 8px; }
.docname svg { margin-bottom: 6px; }
.topsearch { display: flex; align-items: center; gap: 14px; margin: 6px 0; padding: 1px 22px 0; background: #202020; border-radius: 3px; font-size: 16px; color: #c4c4c4; }
.account { display: flex; justify-content: flex-end; align-items: center; }
.signin { display: flex; align-items: center; gap: 12px; margin-right: 40px; }
.win { display: flex; margin-left: 41px; }
.signin + .win { margin-left: 0; }

/* menu */
.menubar { display: flex; align-items: center; height: 46px; padding: 0 7px 4px 28px; font-size: 17px; color: #d6d6d6; gap: 27px; }
.menubar a { line-height: 34px; }
.menubar .file { margin-right: 14px; }
.menubar .on { color: #fff; font-weight: 600; border-bottom: 2px solid var(--accent); line-height: 30px; margin-top: 2px; }
.share { display: flex; align-items: center; justify-content: space-between; margin-left: auto; width: 105px; height: 30px; padding: 0 9px; border-radius: 4px; background: #0c695a; color: #c9dfd9; font-size: 14px; }

/* ribbon */
.ribbon { position: relative; z-index: 3; display: flex; height: 125px; flex: none; margin: 0 10px; background: var(--panel); border-radius: 8px; font-size: 14px; color: #f0f0f0; box-shadow: 0 2px 6px rgba(0, 0, 0, .25); }
.group { position: relative; margin: 5px 0; padding-top: 3px; border-right: 1px solid #3c3c3c; display: flex; flex-direction: column; align-items: center; }
.gbody { display: flex; height: 91px; align-items: flex-start; }
.glabel { line-height: 20px; font-size: 12px; font-weight: 600; white-space: nowrap; }
.g-themes { width: 613px; padding-right: 1px; }
.g-themes .gbody { align-items: center; padding-bottom: 2px; }
.gallery { display: flex; align-items: center; height: 78px; border: 1px solid #6e6e6e; border-radius: 5px; padding-left: 7px; gap: 13px; }
.thumb { display: flex; background: #fff; outline: 1px solid #777; outline-offset: 0; }
.thumb text { font: 14px var(--ui); fill: #252525; }
.more { align-self: stretch; width: 20px; border-left: 1px solid #6e6e6e; margin-left: -6px; display: grid; place-items: center; }
.g-scale { width: 79px; }
.g-mobile { width: 72px; }
.big { display: flex; flex-direction: column; align-items: center; gap: 6px; min-width: 50px; height: 90px; padding: 2px 0 0; border: 2px solid transparent; text-align: center; }
.big svg:first-child { height: 36px; }
.focus { border-color: #fff; }
.pressed { border: 1px solid #d6d6d6; padding-top: 3px; }
.g-opts { width: 181px; align-items: flex-start; padding: 7px 0 0 24px; gap: 17px; font-size: 16px; }
.g-opts label { display: flex; align-items: center; gap: 11px; height: 26px; }
input[type=checkbox] { appearance: none; margin: 0; flex: none; }
.box-lg { width: 25px; height: 25px; border: 1px solid #a8a8a8; border-radius: 5px; }
.g-panes { width: 351px; padding-left: 10px; padding-right: 10px; }
.g-panes .gbody { gap: 0; align-self: stretch; justify-content: space-between; }
.tip { position: absolute; z-index: 5; left: -174px; top: 102px; width: 427px; height: 32px; line-height: 31px; text-align: center; white-space: nowrap; background: #232323; border-radius: 2px; box-shadow: 0 4px 10px rgba(0, 0, 0, .3); border-top: 1px solid #3a3a3a; color: #fff; }
.tip::before { content: ""; position: absolute; left: 209px; top: -6px; width: 12px; height: 12px; background: #232323; transform: rotate(45deg); z-index: -1; }
.collapse { margin: auto 11px 11px auto; display: flex; }

/* shell */
.shell { flex: 1; min-height: 0; display: flex; border-bottom: 2px solid #555; }
.rail { width: 51px; flex: none; display: flex; flex-direction: column; align-items: center; color: #c4c4c4; border-right: 1px solid #444; }
.rail button { width: 50px; height: 50px; display: grid; place-items: center; padding-bottom: 2px; }
.rail .on { color: #fff; border-left: 2px solid var(--accent); padding-right: 2px; }
.rail text { font: 700 9px var(--ui); fill: #ddd; stroke: #141414; stroke-width: 3; paint-order: stroke; }
.workspace { position: relative; flex: 1; min-width: 0; display: flex; flex-direction: column; }
.stage { flex: 1; min-height: 0; display: flex; background: #fff; color: #252423; }
.canvas { flex: 1; min-width: 0; }
.canvas h1 { font: 700 23px/44px var(--ui); height: 45px; text-align: center; padding-right: 2px; }
.report { background: #f6f6f6; padding: 8px 10px 12px 2px; margin-right: 1px; height: 610px; box-shadow: 0 5px 5px -3px rgba(0, 0, 0, .18); display: flex; flex-direction: column; font-family: var(--chart); }
.kpis { display: grid; grid-template-columns: 272fr 222fr 203fr 205fr 201fr; gap: 10px; margin-left: 9px; align-items: end; height: 66px; flex: none; }
.slicer { position: relative; height: 66px; background: #fff; padding: 3px 8px 0 10px; border-radius: 3px; font-size: 12px; }
.slicer svg { color: #777; }
.slicer .cv { position: absolute; right: 11px; top: 6px; }
.slicer label { padding-left: 2px; line-height: 18px; display: block; font-size: 13px; }
.selwrap { position: relative; margin-top: 4px; color: #666; }
.selwrap select { appearance: none; width: 100%; height: 26px; border: 2px solid #888; background: #fff; padding: 2px 4px 0; font-size: 12px; border-radius: 0; }
.selwrap svg { position: absolute; right: 6px; top: 7px; }
.kpi { height: 55px; background: #fff; border-radius: 8px; display: flex; align-items: center; gap: 10px; padding-left: 14px; }
.kpi div { display: flex; flex-direction: column; line-height: 13px; }
.kpi span { font-size: 10px; color: #555; white-space: nowrap; }
.kpi b { font-size: 13px; font-weight: 400; }
.visuals { display: grid; grid-template-columns: 655fr 481fr; gap: 18px; flex: 1; min-height: 0; }
.leftcol { display: flex; flex-direction: column; min-width: 0; }
.vtools { height: 27px; display: flex; justify-content: flex-end; gap: 8px; flex: none; }
.vtools button { width: 27px; display: grid; place-items: center; background: #fdfdfd; padding-bottom: 3px; }
.mapcard { position: relative; height: 252px; flex: none; border: 1px solid #4c4c4c; background: #fff; display: flex; flex-direction: column; align-items: center; }
.mapcard h2 { align-self: stretch; padding-left: 4px; font-size: 15px; line-height: 18px; height: 28px; }
.map { stroke: #7d8a99; stroke-width: 1; }
.map path { vector-effect: non-scaling-stroke; }
.s1 { fill: #d8eaff; } .s2 { fill: #c6e1ff; } .s3 { fill: #b0d6ff; } .s4 { fill: #8dc5ff; } .s5 { fill: #65b5ff; } .s6 { fill: #118dff; } .s7 { fill: #777; stroke: #777; }
.maptip { position: absolute; z-index: 2; left: 356px; top: 117px; width: 310px; height: 89px; background: #fff; display: grid; grid-template-columns: 114px 1fr; column-gap: 15px; align-content: center; font: 15px/24px var(--ui); }
.maptip span:nth-child(odd) { text-align: right; }
.treecard { flex: 1; min-height: 0; margin-top: 19px; background: #fff; border-radius: 8px; padding: 8px 9px 9px 8px; display: flex; flex-direction: column; }
.treecard h3, .barcard h3 { font-size: 12px; line-height: 15px; }
.treecard p, .barcard p { font-size: 9px; line-height: 15px; color: #666; }
.tree { flex: 1; display: grid; grid-template-columns: 250fr 174fr 144fr 64fr; gap: 2px; margin-top: 1px; font-size: 9px; line-height: 12px; font-weight: 700; color: #fff; }
.tc { display: grid; gap: 2px; grid-template-rows: 90fr 87fr; }
.tc div { padding: 6px 4px; white-space: nowrap; overflow: hidden; }
.t1 { grid-template-rows: 97fr 79fr; }
.t4 { grid-template-rows: 1fr; }
.t1 div { background: #5f6dd8; } .t1 div + div { background: #5880cb; }
.t2 div { background: #538fc1; }
.t3 div { background: #4f98bb; }
.t4 div { background: #509db6; }
.barcard { margin-top: 27px; background: #fff; border-radius: 8px; padding: 7px 20px 0 8px; min-width: 0; }
.barcard p { margin: 1px 0 10px; }
.chart { position: relative; }
.row { position: relative; display: flex; height: 21px; align-items: center; gap: 8px; }
.row span { width: 117px; flex: none; text-align: right; font-size: 9px; color: #555; white-space: nowrap; }
.row div { flex: 1; display: flex; }
.row b { height: 10px; }
.gridl { position: absolute; left: 125px; right: 0; top: -1px; bottom: -4px; display: flex; justify-content: space-between; }
.gridl i { width: 1px; background: repeating-linear-gradient(#c8c8c8 0 1px, transparent 1px 5px); }
.axis { display: flex; justify-content: space-between; margin: 6px -16px 0 109px; font-size: 9px; line-height: 14px; color: #555; }
.axis span { width: 32px; text-align: center; }
.pu { background: #6b007b; } .na { background: #12239e; } .vi { background: #744ec2; } .or { background: #e66c37; } .ye { background: #d9b300; } .bl { background: #118dff; } .pi { background: #e044a7; }

/* filters pane */
.filters { width: 251px; flex: none; border-left: 1px solid #9a9a9a; }
.filters header { display: flex; align-items: center; padding: 13px 16px 0 17px; height: 37px; }
.filters h2, .viz h2, .data h2 { font-size: 18px; line-height: 24px; font-weight: 600; }
.filters h2 { margin: 0 auto 0 12px; }
.filters header button { margin-left: 26px; display: flex; padding-bottom: 4px; }
.fsearch { padding: 20px 15px 5px 9px; border-bottom: 1px solid #9a9a9a; }
.fsearch label { display: flex; align-items: center; gap: 19px; height: 38px; border: 1px solid #8a8a8a; border-radius: 2px; padding-left: 15px; font-size: 16px; }
.fsearch input { width: 120px; }
.fsec { display: flex; justify-content: space-between; padding: 21px 17px 11px 9px; height: 52px; }
.drop { margin: 0 10px 0 9px; height: 58px; border: 1px solid #333; border-radius: 2px; display: grid; place-items: center; }
.drop + .fsec { height: 63px; padding-top: 32px; }

/* page tabs */
.pages { display: flex; height: 44px; flex: none; background: var(--panel); }
.pages a { display: grid; place-items: center; border-right: 1px solid #484848; padding: 2px 0 0; white-space: nowrap; flex: none; width: 162px; }
.pages a:nth-of-type(1) { width: 184px; border-left: 1px solid #777; border-bottom: 5px solid var(--accent); padding-top: 7px; font-weight: 600; }
.pages a:nth-of-type(3) { width: 202px; }
.pages a:nth-of-type(4), .pages a:nth-of-type(5) { width: 145px; }
.pages a:nth-of-type(6) { width: 133px; }
.pages a:nth-of-type(7) { width: 139px; border-right: 0; }
.dev { width: 55px; display: grid; place-items: center; padding-bottom: 6px; position: relative; }
.dev.on::after { content: ""; position: absolute; left: 13px; bottom: 5px; width: 30px; height: 4px; border-radius: 2px; background: var(--accent); }
.arr { width: 25px; display: grid; place-items: center; color: #bbb; }
.add { width: 49px; background: #2bab91; display: grid; place-items: center; padding-bottom: 4px; }
.watermark { position: absolute; z-index: 4; left: 64%; bottom: 0; transform: translateX(-50%); display: flex; flex-direction: column; align-items: center; color: rgba(218, 218, 218, .79); pointer-events: none; }
.watermark span:first-child { font: 700 72px/88px "DejaVu Sans", sans-serif; height: 84px; }
.watermark span:last-child { font: 500 36px/36px Roboto, sans-serif; height: 37px; }

/* visualizations */
.viz, .data { width: 226px; flex: none; border-left: 1px solid var(--line); }
.viz header, .data header { display: flex; justify-content: space-between; align-items: center; padding: 13px 12px 0 10px; height: 37px; }
.data header button, .viz header button { display: flex; }
.viz { display: flex; flex-direction: column; }
.viz h2 { font-weight: 700; }
.viz > h3 { padding-left: 10px; font-weight: 600; margin-top: 11px; }
.modes { display: flex; gap: 43px; padding: 4px 0 0 10px; }
.modes button { width: 40px; height: 40px; display: grid; place-items: center; }
.modes .on { background: #262626; border-radius: 2px; }
.caret { height: 16px; border-bottom: 1px solid var(--line); padding: 5px 0 0 19px; display: flex; }
.vgrid { display: grid; grid-template-columns: repeat(6, 35px); grid-auto-rows: 35px; padding: 12px 0 0 13px; }
.vgrid button { width: 24px; height: 24px; display: flex; }
.vgrid svg { width: 24px; height: 24px; fill: none; stroke-width: 1.4; }
.vgrid .g { stroke: #b8b8b8; fill: none; }
.vgrid .gf { fill: #5a5a5a; stroke: #a0a0a0; }
.vgrid .b { fill: #1267b8; stroke: #3f93dc; background: none; }
.vgrid .bl { stroke: #4aa0e6; fill: none; }
.vgrid text { font: 10px var(--ui); fill: #4aa0e6; }
.vgrid .tx { font: 20px/22px var(--ui); color: #3f97dc; }
.vgrid .r { font-weight: 600; padding-left: 4px; }
.vmore { height: 20px; padding: 9px 0 0 18px; display: flex; }
.wells { margin-top: 15px; border-top: 1px solid #ddd; padding: 11px 6px 0 5px; display: flex; flex-direction: column; }
.wells h4, .sw { padding-left: 10px; }
.well { border: 1px dashed #777; border-radius: 2px; padding: 0 12px; line-height: 33px; height: 35px; margin: 7px 0 13px; }
.strong { font-weight: 600; }
.sw { position: relative; display: flex; align-items: center; justify-content: space-between; padding-right: 21px; height: 20px; margin-top: 12px; }
.sw + .sw { margin-top: 14px; }
.sw input { width: 40px; height: 20px; border-radius: 10px; border: 1px solid #b5b5b5; }
.sw input::before { content: ""; display: block; width: 10px; height: 10px; border-radius: 5px; background: #b5b5b5; margin: 4px 0 0 5px; }
.sw input:checked { background: var(--accent); border-color: var(--accent); }
.sw input:checked::before { background: #222; margin-left: 23px; }
.sw i { position: absolute; right: 27px; font-style: normal; font-size: 11px; color: #b5b5b5; }
.sw input:checked + i { right: 41px; color: #164c40; }
.well.dark { background: #000; height: 32px; line-height: 30px; margin: 13px 0 0; padding: 0 10px; white-space: nowrap; }

/* data */
.data { display: flex; flex-direction: column; padding-right: 5px; }
.data header { padding-right: 7px; }
.dsearch { display: flex; align-items: center; gap: 7px; margin: 20px 0 0 5px; height: 30px; flex: none; border: 1px solid #777; border-bottom-color: #bbb; border-radius: 4px; background: #262626; padding-left: 14px; color: #a2a2a2; font-size: 16px; }
.dsearch input { width: 130px; }
.treewrap { flex: 1; min-height: 0; display: flex; margin-top: 10px; overflow: hidden; }
.fields { flex: 1; list-style: none; margin-top: -10px; }
.fields li { height: 30px; display: flex; align-items: center; padding-left: 55px; white-space: nowrap; }
.fields .tb { padding-left: 18px; gap: 7px; }
.fields .tb svg:first-child { width: 10px; }
.fields .tb span { margin-left: 21px; }
.fields .tb svg:nth-child(2) { margin-right: -22px; }
.fields .tb svg[width="20"] + span { margin-left: 19px; }
.fields label { display: flex; align-items: center; }
.fields input { width: 15px; height: 15px; border: 1px solid #b0b0b0; border-radius: 2px; }
.fields label svg { margin-left: 9px; margin-right: 5px; }
.fields label svg[width="20"] { margin-right: 3px; }
.fields .exp { padding-left: 38px; gap: 7px; }
.scroll { width: 10px; flex: none; padding-top: 185px; padding-bottom: 10px; }
.scroll div { height: 100%; background: #858585; }
```
